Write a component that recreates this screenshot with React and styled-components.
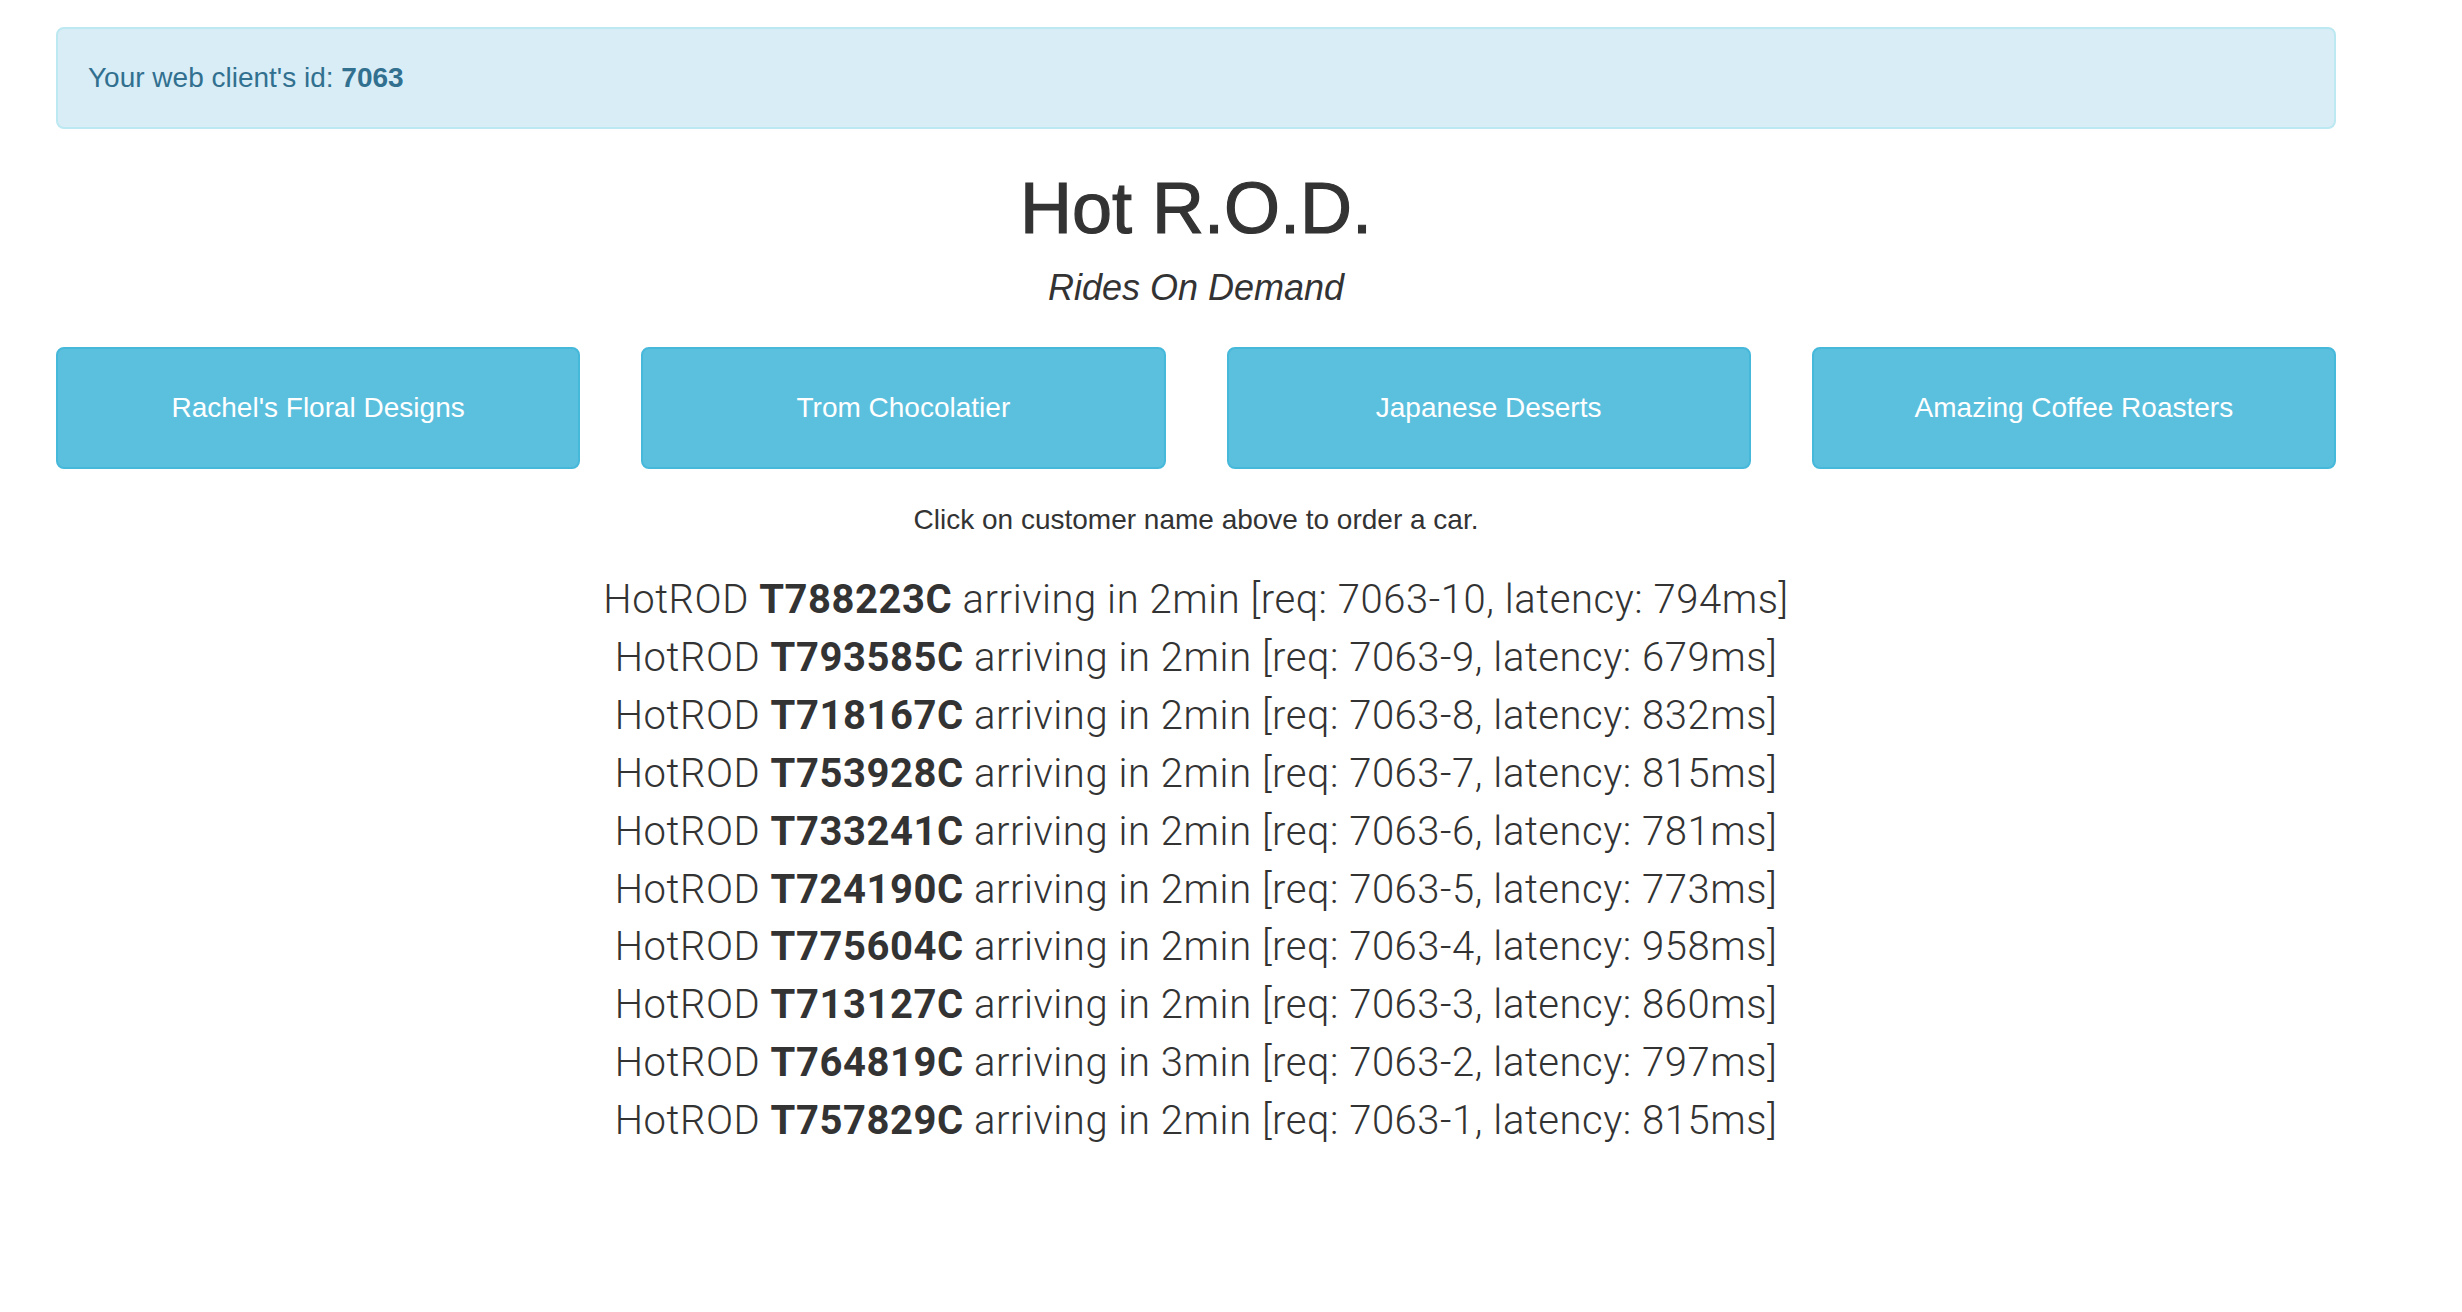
import React from 'react';
import styled, { createGlobalStyle } from 'styled-components';

const GlobalStyle = createGlobalStyle`
  html, body {
    margin: 0;
    padding: 0;
    background: #ffffff;
  }
  body {
    font-family: "Liberation Sans", Arial, sans-serif;
    color: #333333;
    font-size: 28px;
    line-height: 40px;
  }
`;

const customers = [
  "Rachel's Floral Designs",
  'Trom Chocolatier',
  'Japanese Deserts',
  'Amazing Coffee Roasters',
];

const rides = [
  { car: 'T788223C', eta: 2, req: '7063-10', latency: 794 },
  { car: 'T793585C', eta: 2, req: '7063-9', latency: 679 },
  { car: 'T718167C', eta: 2, req: '7063-8', latency: 832 },
  { car: 'T753928C', eta: 2, req: '7063-7', latency: 815 },
  { car: 'T733241C', eta: 2, req: '7063-6', latency: 781 },
  { car: 'T724190C', eta: 2, req: '7063-5', latency: 773 },
  { car: 'T775604C', eta: 2, req: '7063-4', latency: 958 },
  { car: 'T713127C', eta: 2, req: '7063-3', latency: 860 },
  { car: 'T764819C', eta: 3, req: '7063-2', latency: 797 },
  { car: 'T757829C', eta: 2, req: '7063-1', latency: 815 },
];

const App = () => {
  return (
    <>
      <GlobalStyle />
      <Page>
        <Alert>
          Your web client's id:&nbsp;<strong>7063</strong>
        </Alert>

        <Title>Hot R.O.D.</Title>
        <Subtitle>Rides On Demand</Subtitle>

        <CustomerRow>
          {customers.map((name) => (
            <CustomerButton key={name}>{name}</CustomerButton>
          ))}
        </CustomerRow>

        <Hint>Click on customer name above to order a car.</Hint>

        <RideList>
          {rides.map((r) => (
            <Ride key={r.req}>
              HotROD <b>{r.car}</b> arriving in {r.eta}min [req: {r.req},
              latency: {r.latency}ms]
            </Ride>
          ))}
        </RideList>
      </Page>
    </>
  );
};

const Page = styled.div`
  width: 2280px;
  margin-left: 56px;
  padding-top: 27px;
  padding-bottom: 80px;
`;

const Alert = styled.div`
  box-sizing: border-box;
  height: 102px;
  display: flex;
  align-items: center;
  padding: 0 30px;
  background-color: #d9edf7;
  border: 2px solid #bce8f1;
  border-radius: 8px;
  color: #31708f;
  font-size: 28px;

  strong {
    font-weight: 700;
  }
`;

const Title = styled.h1`
  margin: 40px 0 0;
  font-size: 72px;
  line-height: 79px;
  font-weight: 400;
  -webkit-text-stroke: 1.2px #333333;
  text-align: center;
  color: #333333;
`;

const Subtitle = styled.div`
  margin-top: 20px;
  font-size: 36px;
  line-height: 40px;
  font-style: italic;
  text-align: center;
`;

const CustomerRow = styled.div`
  display: grid;
  grid-template-columns: repeat(4, 1fr);
  column-gap: 61px;
  margin-top: 39px;
`;

const CustomerButton = styled.button`
  box-sizing: border-box;
  height: 122px;
  background-color: #5bc0de;
  border: 2px solid #46b8da;
  border-radius: 8px;
  color: #ffffff;
  font-family: "Liberation Sans", Arial, sans-serif;
  font-size: 28px;
  cursor: pointer;
`;

const Hint = styled.p`
  margin: 31px 0 0;
  text-align: center;
  font-size: 28px;
  line-height: 40px;
`;

const RideList = styled.div`
  margin-top: 31px;
  text-align: center;
`;

const Ride = styled.div`
  font-family: Roboto, "Liberation Sans", sans-serif;
  font-weight: 300;
  font-size: 40px;
  line-height: 57.9px;
  letter-spacing: 0.55px;

  b {
    font-weight: 700;
  }
`;

export default App;
